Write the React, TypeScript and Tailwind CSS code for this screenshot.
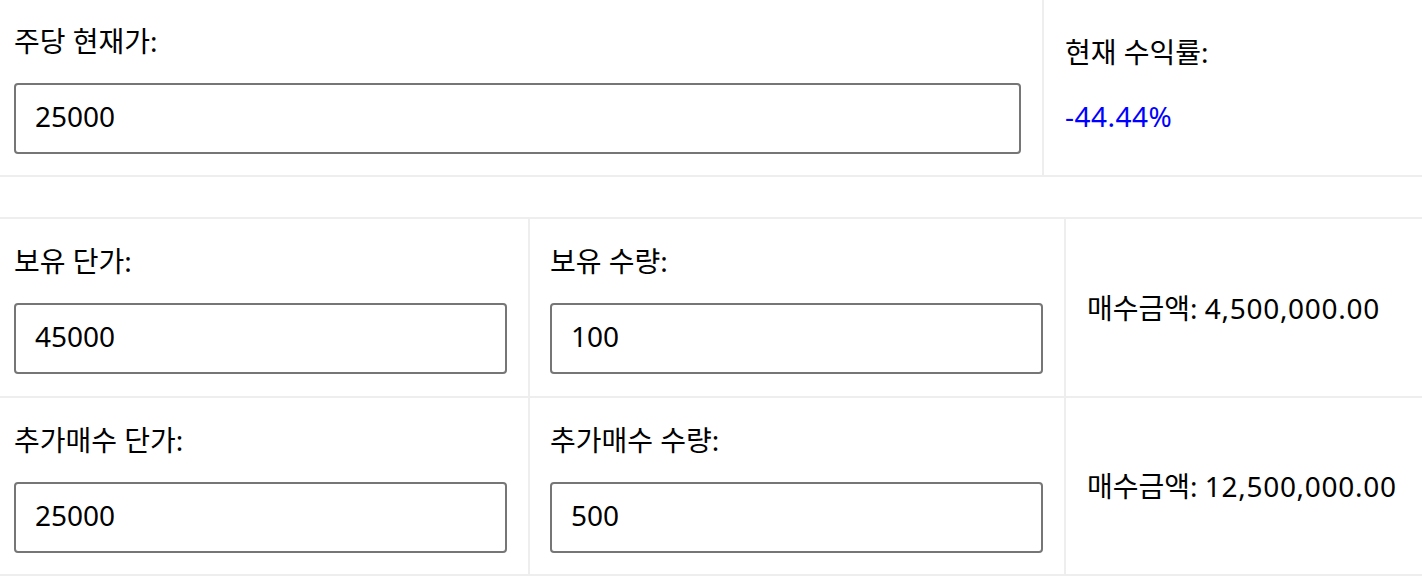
import React, { useState } from 'react';

const font = { fontFamily: '"Noto Sans", "Noto Sans CJK KR", sans-serif' };

// Number formatting for 매수금액 cells
const formatAmount = (value: number): string =>
    value.toLocaleString('en-US', { minimumFractionDigits: 2, maximumFractionDigits: 2 });

const Field: React.FC<{ label: string; value: string; onChange: (v: string) => void }> = ({ label, value, onChange }) => (
    <div className="flex flex-col">
        <label className="block text-[28px] leading-[42px] text-black">{label}</label>
        <input
            type="text"
            value={value}
            onChange={(e) => onChange(e.target.value)}
            className="mt-[21px] h-[71px] w-full rounded-[4px] border-2 border-[#767676] bg-white pb-[6px] pl-[19px] text-[28px] text-black outline-none"
            style={font}
        />
    </div>
);

export default function App() {
    const [currentPrice, setCurrentPrice] = useState('25000');
    const [holdPrice, setHoldPrice] = useState('45000');
    const [holdQty, setHoldQty] = useState('100');
    const [addPrice, setAddPrice] = useState('25000');
    const [addQty, setAddQty] = useState('500');

    const holdAmount = parseFloat(holdPrice) * parseFloat(holdQty);
    const addAmount = parseFloat(addPrice) * parseFloat(addQty);

    const rate = ((parseFloat(currentPrice) - parseFloat(holdPrice)) / parseFloat(holdPrice)) * 100;

    return (
        <div className="min-h-screen w-[1422px] overflow-hidden bg-white text-black" style={font}>
            {/* top table */}
            <div className="flex border-b-2 border-[#eeeeee]">
                <div className="w-[1042px] shrink-0 pl-[14px] pr-[21px] pt-[20px] pb-[21px]">
                    <Field label="주당 현재가:" value={currentPrice} onChange={setCurrentPrice} />
                </div>
                <div className="flex flex-1 flex-col gap-[22px] border-l-2 border-[#eeeeee] pl-[21px] pt-[31px]">
                    <div className="text-[28px] leading-[42px]">현재 수익률:</div>
                    <div className="text-[28px] leading-[42px] tracking-[0.5px] text-[#0000ff]">{rate.toFixed(2)}%</div>
                </div>
            </div>

            {/* bottom table */}
            <div className="mt-[40px] border-t-2 border-[#eeeeee]">
                <div className="flex border-b-2 border-[#eeeeee]">
                    <div className="w-[528px] shrink-0 pl-[14px] pr-[21px] pt-[21px] pb-[22px]">
                        <Field label="보유 단가:" value={holdPrice} onChange={setHoldPrice} />
                    </div>
                    <div className="w-[536px] shrink-0 border-l-2 border-[#eeeeee] pl-[20px] pr-[21px] pt-[21px] pb-[22px]">
                        <Field label="보유 수량:" value={holdQty} onChange={setHoldQty} />
                    </div>
                    <div className="flex flex-1 items-center border-l-2 border-[#eeeeee] pl-[21px]">
                        <span className="text-[28px] leading-[42px]">
                            매수금액: <span className="tracking-[0.7px]">{formatAmount(holdAmount)}</span>
                        </span>
                    </div>
                </div>
                <div className="flex border-b-2 border-[#eeeeee]">
                    <div className="w-[528px] shrink-0 pl-[14px] pr-[21px] pt-[21px] pb-[21px]">
                        <Field label="추가매수 단가:" value={addPrice} onChange={setAddPrice} />
                    </div>
                    <div className="w-[536px] shrink-0 border-l-2 border-[#eeeeee] pl-[20px] pr-[21px] pt-[21px] pb-[21px]">
                        <Field label="추가매수 수량:" value={addQty} onChange={setAddQty} />
                    </div>
                    <div className="flex flex-1 items-center border-l-2 border-[#eeeeee] pl-[21px]">
                        <span className="text-[28px] leading-[42px]">
                            매수금액: <span className="tracking-[0.7px]">{formatAmount(addAmount)}</span>
                        </span>
                    </div>
                </div>
            </div>
        </div>
    );
}
